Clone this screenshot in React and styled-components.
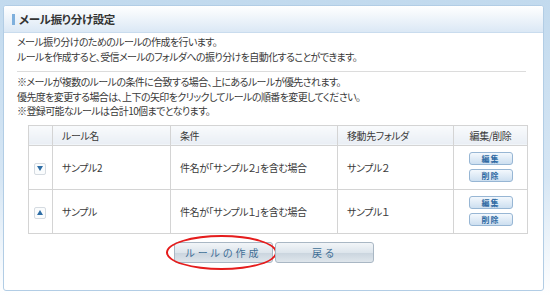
import React from 'react';
import styled, { createGlobalStyle } from 'styled-components';

const GlobalStyle = createGlobalStyle`
  html, body {
    margin: 0;
    padding: 0;
  }
  body {
    background: linear-gradient(#c2daee 0%, #d6e6f4 60%, #ffffff 100%);
    font-family: "Noto Sans CJK JP", "Liberation Sans", sans-serif;
    font-feature-settings: "palt";
    color: #3a3a3a;
  }
`;

const Page = styled.div`
  width: 550px;
  height: 296px;
  padding: 5px 6px 0 3px;
  box-sizing: border-box;
`;

const Panel = styled.div`
  height: 286px;
  background: #fff;
  border: 1px solid #b2cde5;
  border-radius: 3px;
  box-sizing: border-box;
  overflow: hidden;
`;

const PanelHeader = styled.div`
  height: 26px;
  display: flex;
  align-items: center;
  padding-left: 8px;
  background: linear-gradient(#ffffff, #dbe8f5);
  border-bottom: 1px solid #c9dcee;
`;

const Title = styled.h1`
  margin: 0;
  font-size: 11.5px;
  font-weight: bold;
  color: #333;
  line-height: 11px;
  padding-left: 4px;
  border-left: 3px solid #7fb0dd;
  letter-spacing: -0.3px;
`;

const Body = styled.div`
  padding: 2px 13px 0 13px;
`;

const Text = styled.p`
  margin: 0;
  font-size: 10px;
  line-height: 14.5px;
  letter-spacing: -0.6px;
  color: #3a3a3a;
  white-space: nowrap;
`;

const Divider = styled.hr`
  border: 0;
  border-top: 1px solid #dcdcdc;
  margin: 7px 4px 3px 0;
`;

const Table = styled.table`
  margin: 6px 0 0 11px;
  width: 499px;
  border-collapse: collapse;
  table-layout: fixed;
  font-size: 10px;
  letter-spacing: -0.4px;
  color: #3a3a3a;
`;

const Th = styled.th`
  height: 19px;
  padding: 0 0 0 9px;
  text-align: ${({ center }) => (center ? 'center' : 'left')};
  font-weight: normal;
  border: 1px solid #d4d4d4;
  background: linear-gradient(#f9fbfd, #e9eef4);
  ${({ center }) => center && 'padding: 0;'}
`;

const Td = styled.td`
  height: 43px;
  padding: 0 0 0 9px;
  border: 1px solid #d4d4d4;
  vertical-align: middle;
  ${({ center }) => center && 'padding: 0; text-align: center;'}
`;

const ArrowBox = styled.span`
  display: inline-flex;
  align-items: center;
  justify-content: center;
  width: 12px;
  height: 12px;
  border: 1px solid #d5dbe1;
  border-radius: 2px;
  background: #fafcfd;
  box-sizing: border-box;
  margin-left: -4px;
`;

const CellButtons = styled.div`
  display: flex;
  flex-direction: column;
  align-items: center;
  gap: 4px;
`;

const SmallButton = styled.span`
  display: flex;
  align-items: center;
  justify-content: center;
  width: 44px;
  height: 13px;
  font-size: 8px;
  font-weight: bold;
  color: #2f6aa3;
  border: 1px solid #97b6d4;
  border-radius: 3px;
  background: linear-gradient(#f3f8fd, #cddff0);
  box-sizing: border-box;
  letter-spacing: 1px;
`;

const Actions = styled.div`
  display: flex;
  justify-content: center;
  gap: 2px;
  margin-top: 8px;
  padding-left: 1px;
`;

const Button = styled.span`
  position: relative;
  display: flex;
  align-items: center;
  justify-content: center;
  width: 99px;
  height: 21px;
  font-size: 10px;
  color: #3f6f96;
  letter-spacing: 3px;
  border: 1px solid #a9b7c4;
  border-radius: 3px;
  background: linear-gradient(#f2f5f8 0%, #dde5ec 50%, #c9d4de 51%, #dfe6ec 100%);
  box-sizing: border-box;
`;

const Highlight = styled.span`
  position: absolute;
  left: -9px;
  top: -8px;
  width: 111px;
  height: 35px;
  border: 2px solid #e51c1c;
  border-radius: 50%;
  box-sizing: border-box;
  pointer-events: none;
`;

const Arrow = ({ up }) => (
  <svg width="6" height="5" viewBox="0 0 6 5">
    <path d={up ? 'M3 0 L6 5 L0 5 Z' : 'M0 0 L6 0 L3 5 Z'} fill="#2e6ea6" />
  </svg>
);

const rules = [
  { name: 'サンプル2', cond: '件名が「サンプル２」を含む場合', folder: 'サンプル２', up: false },
  { name: 'サンプル', cond: '件名が「サンプル１」を含む場合', folder: 'サンプル１', up: true },
];

export default function App() {
  return (
    <>
      <GlobalStyle />
      <Page>
        <Panel>
          <PanelHeader>
            <Title>メール振り分け設定</Title>
          </PanelHeader>
          <Body>
            <Text>メール振り分けのためのルールの作成を行います。</Text>
            <Text>ルールを作成すると、受信メールのフォルダへの振り分けを自動化することができます。</Text>
            <Divider />
            <Text>※メールが複数のルールの条件に合致する場合、上にあるルールが優先されます。</Text>
            <Text>優先度を変更する場合は、上下の矢印をクリックしてルールの順番を変更してください。</Text>
            <Text>※登録可能なルールは合計10個までとなります。</Text>
            <Table>
              <colgroup>
                <col style={{ width: 24 }} />
                <col style={{ width: 118 }} />
                <col style={{ width: 167 }} />
                <col style={{ width: 116 }} />
                <col style={{ width: 74 }} />
              </colgroup>
              <thead>
                <tr>
                  <Th />
                  <Th>ルール名</Th>
                  <Th>条件</Th>
                  <Th>移動先フォルダ</Th>
                  <Th center>編集/削除</Th>
                </tr>
              </thead>
              <tbody>
                {rules.map((r) => (
                  <tr key={r.name}>
                    <Td>
                      <ArrowBox>
                        <Arrow up={r.up} />
                      </ArrowBox>
                    </Td>
                    <Td>{r.name}</Td>
                    <Td>{r.cond}</Td>
                    <Td>{r.folder}</Td>
                    <Td center>
                      <CellButtons>
                        <SmallButton>編集</SmallButton>
                        <SmallButton>削除</SmallButton>
                      </CellButtons>
                    </Td>
                  </tr>
                ))}
              </tbody>
            </Table>
            <Actions>
              <Button>
                ルールの作成
                <Highlight />
              </Button>
              <Button>戻る</Button>
            </Actions>
          </Body>
        </Panel>
      </Page>
    </>
  );
}
